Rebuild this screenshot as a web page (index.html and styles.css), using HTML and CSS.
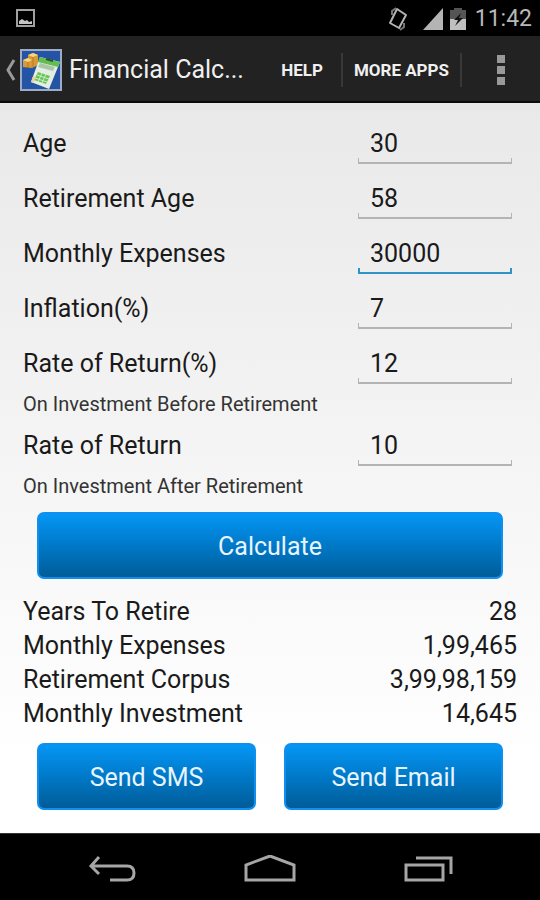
FILE: index.html
```html
<!DOCTYPE html>
<html lang="en">
<head>
  <meta charset="UTF-8">
  <meta name="viewport" content="width=device-width, initial-scale=1.0">
  <title>Financial Calculator</title>
  <link rel="stylesheet" href="styles.css">
</head>
<body>
  <div class="status-bar">
    <svg class="picture-icon" width="20" height="20" viewBox="0 0 20 20">
      <rect x="1" y="1" width="17" height="16" fill="none" stroke="#a0a0a0" stroke-width="2"/>
      <path d="M3 15v-3l3-2 3 2 2-1 2 2 3-1v3z" fill="#c4c4c4"/>
    </svg>
    <div class="status-icons">
      <svg width="22" height="26" viewBox="0 0 22 26">
        <path d="M10 3l9 6-7 13-9-5z" fill="none" stroke="#b4b4b4" stroke-width="2" stroke-linejoin="round"/>
        <path d="M5 9V5l4-3M17 17v4l-4 3" fill="none" stroke="#777" stroke-width="2"/>
      </svg>
      <svg class="signal-icon" width="20" height="22" viewBox="0 0 20 22">
        <path d="M0 22L20 0v22z" fill="#b4b4b4"/>
      </svg>
      <svg class="battery-icon" width="16" height="22" viewBox="0 0 16 22">
        <path d="M4 0h8v2h4v9H0V2h4z" fill="#555"/>
        <path d="M0 11h16v11H0z" fill="#c0c0c0"/>
        <path d="M11 5L4 12h4l-3 6 8-8H9z" fill="#111"/>
      </svg>
      <span class="clock">11:42</span>
    </div>
  </div>

  <header class="action-bar">
    <button class="up-btn" aria-label="Navigate up">
      <svg width="12" height="22" viewBox="0 0 12 22">
        <path d="M9 1L3 11l6 10" fill="none" stroke="#999" stroke-width="3"/>
      </svg>
      <svg class="app-icon" width="42" height="42" viewBox="0 0 42 42">
        <rect x="1" y="1" width="40" height="40" fill="#2454a6" stroke="#9eabc4" stroke-width="2"/>
        <path d="M8 6l5-2 5 2v10l-6 3-9-1v-7l5-2z" fill="#d99a35"/>
        <path d="M8 6l5-2 5 2-5 2zM3 11l5-2 4 2-4 2z" fill="#f7d582"/>
        <path d="M13 8v10M8 13v5" stroke="#b87820" stroke-width="1"/>
        <path d="M20 8l20 5-11 27-18-7z" fill="#e4eee2"/>
        <path d="M20 8l20 5-2 5-20-5z" fill="#63bd50"/>
        <path d="M26 10l7 2" stroke="#28552c" stroke-width="2"/>
        <path d="M20 14l15 4-2 4-15-4z" fill="#a9c7a6"/>
        <path d="M18 23l12 4-4 8-12-4z" fill="#68c559"/>
        <path d="M22 24l-4 9M26 25l-4 9M17 26l12 4M15 29l12 4" stroke="#c9edc0" stroke-width="1"/>
        <path d="M13 27l3 1-3 6-2-1z" fill="#eed19a"/>
      </svg>
    </button>
    <h1 class="title">Financial Calc...</h1>
    <button class="action help">HELP</button>
    <button class="action more">MORE APPS</button>
    <button class="overflow" aria-label="More options">
      <svg width="8" height="30" viewBox="0 0 8 30">
        <path d="M0 0h8v8H0zM0 11h8v8H0zM0 22h8v8H0z" fill="#999"/>
      </svg>
    </button>
  </header>

  <main class="content">
    <form class="calc-form">
      <div class="row">
        <label for="age">Age</label>
        <input type="text" id="age" inputmode="numeric" value="30">
      </div>
      <div class="row">
        <label for="retirementAge">Retirement Age</label>
        <input type="text" id="retirementAge" inputmode="numeric" value="58">
      </div>
      <div class="row">
        <label for="expenses">Monthly Expenses</label>
        <input type="text" id="expenses" class="active" inputmode="numeric" value="30000">
      </div>
      <div class="row">
        <label for="inflation">Inflation(%)</label>
        <input type="text" id="inflation" inputmode="numeric" value="7">
      </div>
      <div class="row">
        <label for="returnBefore">Rate of Return(%)</label>
        <input type="text" id="returnBefore" inputmode="numeric" value="12">
      </div>
      <p class="hint">On Investment Before Retirement</p>
      <div class="row">
        <label for="returnAfter">Rate of Return</label>
        <input type="text" id="returnAfter" inputmode="numeric" value="10">
      </div>
      <p class="hint">On Investment After Retirement</p>
      <div class="buttons">
        <button type="button" class="btn">Calculate</button>
      </div>
    </form>

    <table class="results">
      <tr><th scope="row">Years To Retire</th><td>28</td></tr>
      <tr><th scope="row">Monthly Expenses</th><td>1,99,465</td></tr>
      <tr><th scope="row">Retirement Corpus</th><td>3,99,98,159</td></tr>
      <tr><th scope="row">Monthly Investment</th><td>14,645</td></tr>
    </table>

    <div class="buttons">
      <button type="button" class="btn">Send SMS</button>
      <button type="button" class="btn">Send Email</button>
    </div>
  </main>

  <nav class="nav-bar">
    <button aria-label="Back">
      <svg width="48" height="28" viewBox="0 0 48 28">
        <path d="M11 2L3 11l8 8M4 11h35q7 0 7 7t-7 7H22" fill="none" stroke="#a6a6a6" stroke-width="3"/>
      </svg>
    </button>
    <button aria-label="Home">
      <svg width="54" height="28" viewBox="0 0 54 28">
        <path d="M3 25V10L27 1l24 9v15z" fill="none" stroke="#a6a6a6" stroke-width="3"/>
      </svg>
    </button>
    <button aria-label="Recent apps">
      <svg width="50" height="28" viewBox="0 0 50 28">
        <path d="M2 10h37v15H2zM12 3h35v16" fill="none" stroke="#a6a6a6" stroke-width="3"/>
      </svg>
    </button>
  </nav>
</body>
</html>
```

FILE: styles.css
```css
* {
  box-sizing: border-box;
}
body {
  display: flex;
  flex-direction: column;
  min-height: 100vh;
  margin: 0;
  background: #000;
  color: #1a1a1a;
  font-family: Roboto, sans-serif;
  font-size: 25px;
}
button {
  padding: 0;
  border: none;
  background: none;
  color: inherit;
  font-family: inherit;
  cursor: pointer;
}
svg {
  display: block;
}
.status-bar {
  display: flex;
  justify-content: space-between;
  align-items: center;
  height: 36px;
  padding: 2px 8px 0 16px;
}
.status-icons {
  display: flex;
  align-items: center;
}
.signal-icon {
  margin-left: 14px;
}
.battery-icon {
  margin: 0 9px 0 7px;
}
.clock {
  color: #b8b8b8;
  font-size: 23px;
  line-height: 34px;
}

/* Action bar */
.action-bar {
  display: flex;
  align-items: center;
  height: 67px;
  padding: 2px 0 0 5px;
  border-bottom: 2px solid #0c0c0c;
  background: #222;
  color: #f0f0f0;
}
.up-btn {
  display: flex;
  align-items: center;
  gap: 3px;
}
.title {
  flex: 1;
  min-width: 0;
  margin: 0 0 0 7px;
  font-size: 25px;
  font-weight: normal;
  line-height: 36px;
  white-space: nowrap;
}
.action {
  height: 34px;
  padding: 0 11px;
  border-right: 2px solid #383838;
  font-size: 17px;
  font-weight: bold;
}
.help {
  padding-right: 18px;
}
.overflow {
  display: flex;
  justify-content: center;
  width: 78px;
}

/* Form */
.content {
  flex: 1;
  padding: 13px 23px 23px;
  background: linear-gradient(#e9e9e9, #f0f0f0 30%, #fff 90%);
}
.row {
  display: flex;
  justify-content: space-between;
  align-items: center;
  height: 55px;
}
.row input {
  width: 154px;
  height: 41px;
  margin-right: 5px;
  padding: 0 12px;
  border: none;
  outline: none;
  background:
    linear-gradient(#b4b4b4, #b4b4b4) left bottom / 100% 2px no-repeat,
    linear-gradient(#b4b4b4, #b4b4b4) left bottom / 1px 6px no-repeat,
    linear-gradient(#b4b4b4, #b4b4b4) right bottom / 1px 6px no-repeat;
  color: inherit;
  font-family: inherit;
  font-size: 25px;
}
.row input.active,
.row input:focus {
  background:
    linear-gradient(#2f93c9, #2f93c9) left bottom / 100% 2px no-repeat,
    linear-gradient(#2f93c9, #2f93c9) left bottom / 2px 6px no-repeat,
    linear-gradient(#2f93c9, #2f93c9) right bottom / 2px 6px no-repeat;
}
.hint {
  margin: 0;
  color: #333;
  font-size: 20px;
  line-height: 27px;
}
.buttons {
  display: flex;
  gap: 28px;
  padding: 12px 14px 0;
}
.btn {
  flex: 1;
  height: 67px;
  padding-top: 2px;
  border: 2px solid #0f8ff0;
  border-radius: 7px;
  background: linear-gradient(#0596f5, #0079c8 50%, #005c98);
  color: #e8f4ff;
  font-size: 25px;
}

/* Results */
.results {
  width: 100%;
  margin-top: 16px;
  border-collapse: collapse;
}
.results th,
.results td {
  height: 34px;
  padding: 0;
  font-weight: normal;
  line-height: 34px;
  text-align: left;
}
.results td {
  text-align: right;
}

.nav-bar {
  display: flex;
  justify-content: center;
  gap: 107px;
  height: 67px;
  padding: 3px 0 0 2px;
  border-top: 1px solid #333;
}
```
